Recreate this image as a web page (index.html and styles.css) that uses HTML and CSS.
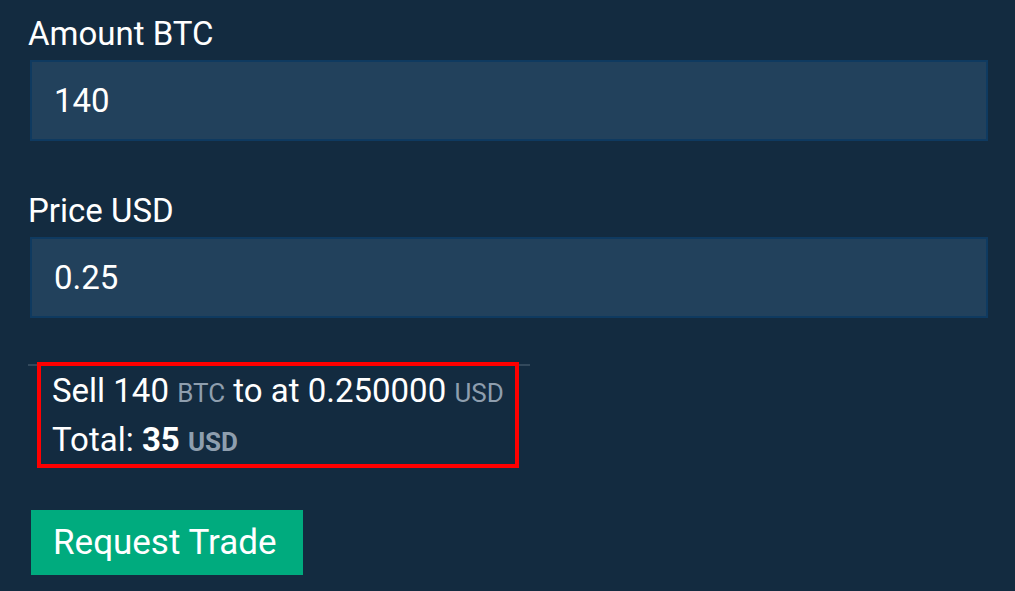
FILE: index.html
```html
<!DOCTYPE html>
<html lang="en">
<head>
<meta charset="utf-8">
<title>Trade</title>
<link rel="stylesheet" href="styles.css">
</head>
<body>
<div class="page">
  <div class="field">
    <label class="label" for="amount">Amount BTC</label>
    <input class="input" id="amount" type="text" value="140">
  </div>
  <div class="field field-second">
    <label class="label" for="price">Price USD</label>
    <input class="input" id="price" type="text" value="0.25">
  </div>
  <div class="summary">
    <div class="highlight">
      <div class="line">Sell 140 <span class="unit">BTC</span> to at 0.250000 <span class="unit">USD</span></div>
      <div class="line">Total: <strong>35</strong> <span class="unit unit-bold">USD</span></div>
    </div>
  </div>
  <button class="btn" type="button">Request Trade</button>
</div>
</body>
</html>
```

FILE: styles.css
```css
html, body {
  margin: 0;
  padding: 0;
  background: #132b40;
}

body {
  font-family: Roboto, "Liberation Sans", sans-serif;
  color: #ffffff;
  width: 1015px;
  height: 591px;
  overflow: hidden;
}

.page {
  padding: 14px 27px 0 28px;
}

.field {
  display: flex;
  flex-direction: column;
}

.field-second {
  margin-top: 50px;
}

.label {
  font-size: 33px;
  line-height: 40px;
  height: 40px;
}

.input {
  margin: 6px 0 0 2px;
  height: 81px;
  box-sizing: border-box;
  border: 2px solid #0f3a60;
  background: #22415c;
  color: #ffffff;
  font-family: Roboto, "Liberation Sans", sans-serif;
  font-size: 33px;
  padding: 0 22px;
  outline: none;
}

.summary {
  margin-top: 46px;
  width: 502px;
  border-top: 2px solid #33495c;
}

.highlight {
  margin-left: 13px;
  width: 474px;
  box-sizing: border-box;
  padding-left: 11px;
  outline: 4px solid #ff0000;
  font-size: 33px;
  line-height: 49px;
}

.unit {
  font-size: 26px;
  line-height: 1;
  color: #8e9eae;
}

.unit-bold {
  font-weight: 700;
}

.line strong {
  font-weight: 700;
}

.btn {
  display: block;
  margin: 46px 0 0 3px;
  width: 272px;
  height: 65px;
  border: none;
  background: #00ab7e;
  color: #ffffff;
  font-family: Roboto, "Liberation Sans", sans-serif;
  font-size: 35px;
  text-align: left;
  padding: 0 0 0 22px;
  cursor: pointer;
}
```
